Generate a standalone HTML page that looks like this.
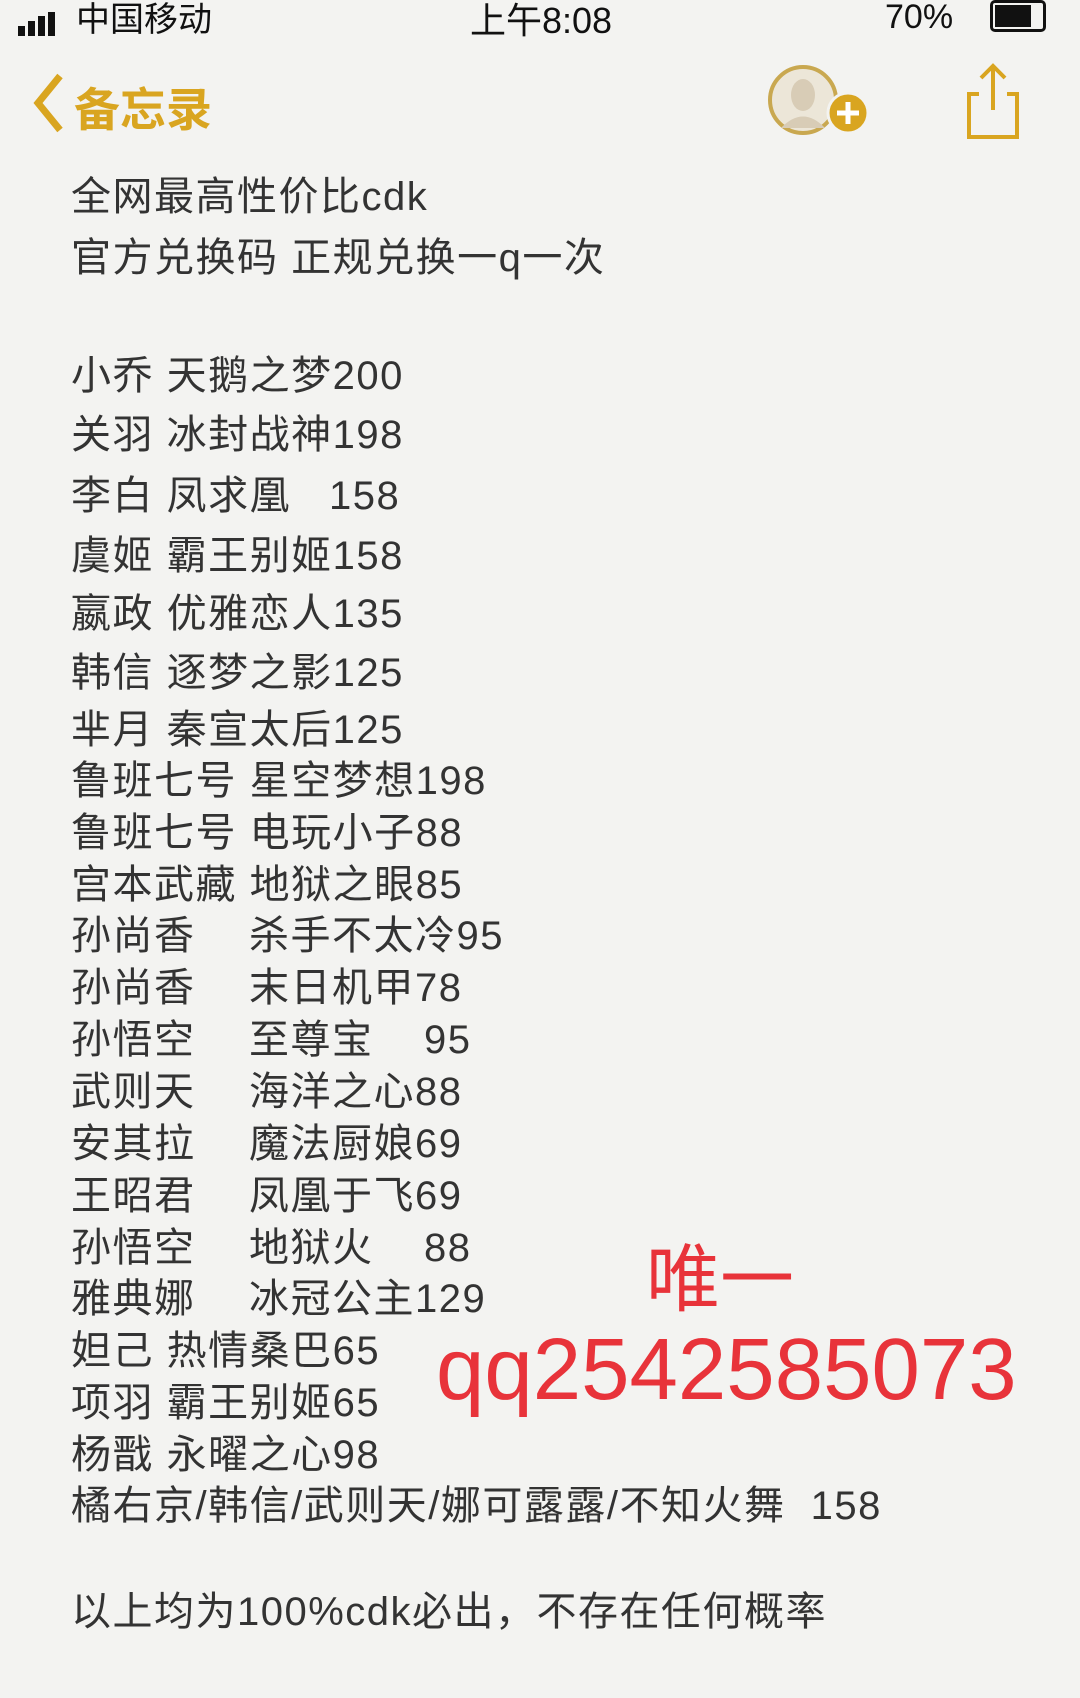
<!DOCTYPE html>
<html><head><meta charset="utf-8"><style>
body{margin:0;width:1080px;height:1698px;background:#f3f3f1;overflow:hidden;position:relative;font-family:"Liberation Sans","Noto Sans CJK SC",sans-serif;color:#333}
.l{position:absolute;left:71px;font-size:40px;line-height:46px;white-space:pre;transform:translateY(-50%);letter-spacing:1.5px}
.t{position:absolute;left:178px;top:0}
.r{position:absolute;color:#e8333a;white-space:nowrap;font-family:"Liberation Sans","Noto Sans CJK SC",sans-serif}
</style></head><body>
<div style="position:absolute;top:-8px;left:0;width:1080px;height:40px;font-size:34px;color:#111">
<div style="position:absolute;left:18px;top:14px">
<span style="display:inline-block;width:7px;height:10px;background:#111;margin-right:3px"></span><span style="display:inline-block;width:7px;height:15px;background:#111;margin-right:3px"></span><span style="display:inline-block;width:7px;height:20px;background:#111;margin-right:3px"></span><span style="display:inline-block;width:7px;height:24px;background:#111"></span></div>
<div style="position:absolute;left:76px;top:0">中国移动</div>
<div style="position:absolute;left:470px;top:0;font-size:36px">上午8:08</div>
<div style="position:absolute;left:885px;top:6px">70%</div>
<div style="position:absolute;left:990px;top:8px;width:50px;height:26px;border:3px solid #111;border-radius:5px"><div style="width:36px;height:22px;margin:2px;background:#111"></div></div>
</div>
<svg style="position:absolute;left:30px;top:72px" width="40" height="62"><path d="M30 4 L8 31 L30 58" stroke="#d9a520" stroke-width="7" fill="none"/></svg>
<div style="position:absolute;left:74px;top:74px;font-size:46px;color:#d9a520;font-weight:bold">备忘录</div>
<svg style="position:absolute;left:765px;top:60px" width="110" height="85"><circle cx="38" cy="40" r="33" fill="#ece6d8" stroke="#c9a850" stroke-width="4"/><ellipse cx="38" cy="35" rx="12" ry="16" fill="#d8ccb6"/><path d="M16 68 Q38 45 60 68" fill="#d8ccb6"/><circle cx="83" cy="53" r="20" fill="#d9a520" stroke="#f3f3f1" stroke-width="3"/><path d="M83 42V64M72 53H94" stroke="#fff" stroke-width="5"/></svg>
<svg style="position:absolute;left:965px;top:62px" width="60" height="80"><path d="M14 32H4V75H52V32H42M28 48V4M16 16L28 4L40 16" stroke="#d9a520" stroke-width="4" fill="none"/></svg>

<div class="l" style="top:197px">全网最高性价比cdk</div>
<div class="l" style="top:258px">官方兑换码 正规兑换一q一次</div>
<div class="l" style="top:376px">小乔 天鹅之梦200</div>
<div class="l" style="top:435px">关羽 冰封战神198</div>
<div class="l" style="top:496px">李白 凤求凰   158</div>
<div class="l" style="top:556px">虞姬 霸王别姬158</div>
<div class="l" style="top:614px">嬴政 优雅恋人135</div>
<div class="l" style="top:673px">韩信 逐梦之影125</div>
<div class="l" style="top:730px">芈月 秦宣太后125</div>
<div class="l" style="top:781px">鲁班七号 星空梦想198</div>
<div class="l" style="top:833px">鲁班七号 电玩小子88</div>
<div class="l" style="top:885px">宫本武藏 地狱之眼85</div>
<div class="l" style="top:936px">孙尚香<span class="t">杀手不太冷95</span></div>
<div class="l" style="top:988px">孙尚香<span class="t">末日机甲78</span></div>
<div class="l" style="top:1040px">孙悟空<span class="t">至尊宝    95</span></div>
<div class="l" style="top:1092px">武则天<span class="t">海洋之心88</span></div>
<div class="l" style="top:1144px">安其拉<span class="t">魔法厨娘69</span></div>
<div class="l" style="top:1196px">王昭君<span class="t">凤凰于飞69</span></div>
<div class="l" style="top:1248px">孙悟空<span class="t">地狱火    88</span></div>
<div class="l" style="top:1299px">雅典娜<span class="t">冰冠公主129</span></div>
<div class="l" style="top:1351px">妲己 热情桑巴65</div>
<div class="l" style="top:1403px">项羽 霸王别姬65</div>
<div class="l" style="top:1455px">杨戬 永曜之心98</div>
<div class="l" style="top:1506px">橘右京/韩信/武则天/娜可露露/不知火舞  158</div>
<div class="l" style="top:1612px">以上均为100%cdk必出，不存在任何概率</div>

<div class="r" style="left:646px;top:1240px;font-size:74px;line-height:80px">唯一</div>
<div class="r" style="left:436px;top:1322px;font-size:87px;line-height:96px">qq2542585073</div>
</body></html>
